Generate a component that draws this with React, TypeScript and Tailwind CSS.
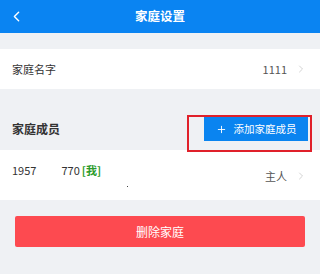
import { ChevronLeft, ChevronRight, Plus } from "lucide-react"

const font = { fontFamily: '"Noto Sans CJK SC", "Noto Sans", sans-serif' }

export default function App() {
  return (
    <div className="relative w-[320px] h-[274px] bg-[#eff1f4] overflow-hidden" style={font}>
      <div className="relative h-[33px] bg-[#0a84f2] flex items-center justify-center">
        <ChevronLeft className="absolute left-[8px] top-[8px] w-[17px] h-[17px] text-white" strokeWidth={2} />
        <span className="text-white text-[12.5px] font-bold">家庭设置</span>
      </div>

      <div className="h-[16px]" />

      <div className="h-[40px] bg-white flex items-center pl-[12px] pr-[13px]">
        <span className="text-[11px] text-[#333]">家庭名字</span>
        <span className="ml-auto text-[11px] text-[#555]">1111</span>
        <ChevronRight className="ml-[8px] w-[12px] h-[12px] text-[#c4c4c4]" strokeWidth={1.5} />
      </div>

      <div className="h-[61px] flex items-start pl-[12px] pr-[12px] pt-[28px]">
        <div className="h-[24px] flex items-center">
          <span className="text-[12px] font-bold text-[#333]">家庭成员</span>
        </div>
        <div className="ml-auto h-[24px] w-[104px] bg-[#0a84f0] flex items-center justify-center gap-[7px] text-white">
          <Plus className="w-[11px] h-[11px]" strokeWidth={2} />
          <span className="text-[10.5px]">添加家庭成员</span>
        </div>
      </div>

      <div className="relative h-[50px] bg-white flex items-start pl-[12px] pr-[13px]">
        <div className="pt-[12px] text-[11px] text-[#333] flex items-center">
          <span>1957</span>
          <span className="ml-[25px]">770</span>
          <span className="ml-[2px] text-[#2b9b2b] font-bold">[我]</span>
        </div>
        <div className="ml-auto flex items-center pt-[18px]">
          <span className="text-[11px] text-[#555]">主人</span>
          <ChevronRight className="ml-[8px] w-[12px] h-[12px] text-[#c4c4c4]" strokeWidth={1.5} />
        </div>
        <span className="absolute left-[127px] top-[36px] w-[1px] h-[1px] bg-[#444]" />
      </div>

      <div className="px-[15px] pt-[16px]">
        <div className="h-[31px] bg-[#fd4a50] rounded-[2px] flex items-center justify-center">
          <span className="text-white text-[12px]">删除家庭</span>
        </div>
      </div>

      <div className="absolute left-[187px] top-[115px] w-[125px] h-[37px] border-2 border-[#e0202a]" />
    </div>
  )
}
